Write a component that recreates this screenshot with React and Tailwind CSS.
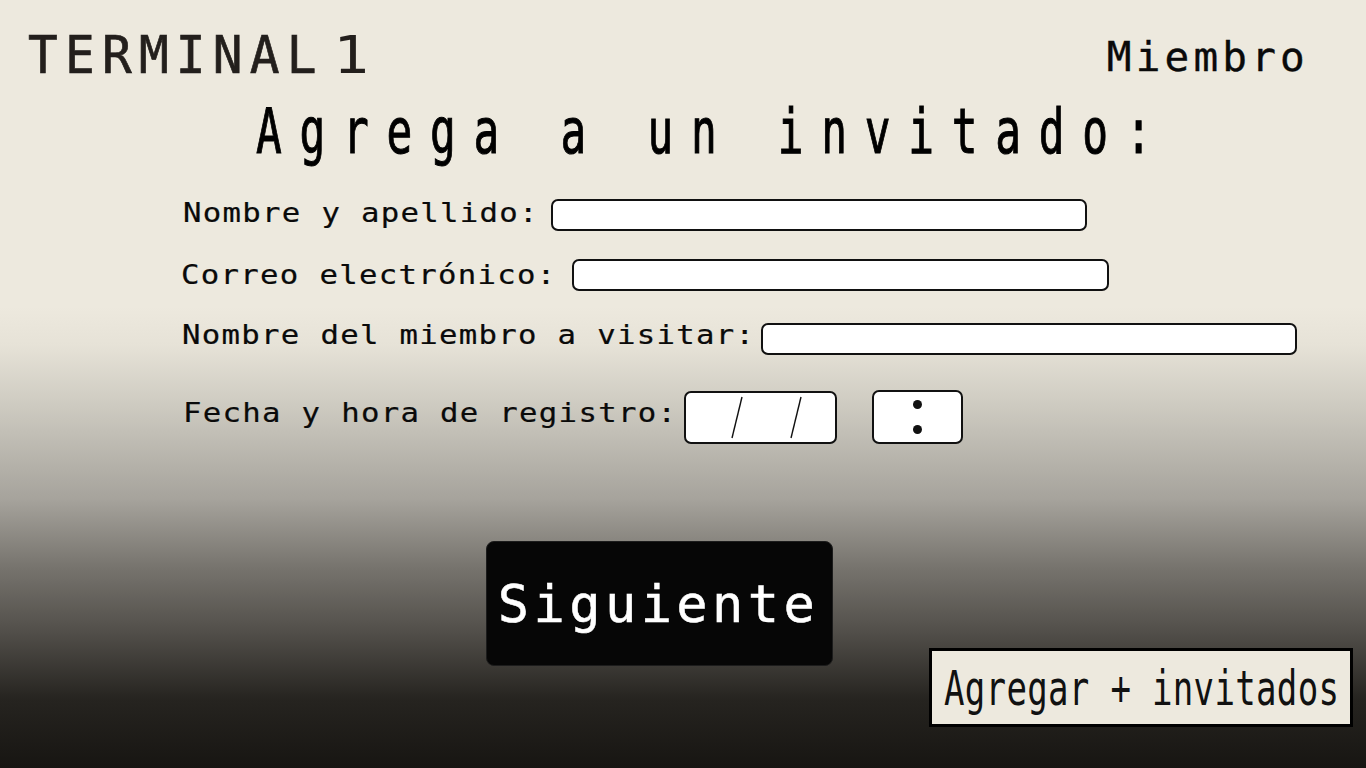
import React from "react";

function Label({ className, children }) {
  return (
    <div className={`shrink-0 ${className}`}>
      <span className="inline-block origin-left scale-x-[1.18] whitespace-nowrap text-[26px] leading-none tracking-[1.1px] text-[#0a0a0a] [-webkit-text-stroke:0.2px_#0a0a0a]">
        {children}
      </span>
    </div>
  );
}

function Field({ className }) {
  return (
    <div className={`h-[32px] rounded-[7px] border-[2.5px] border-[#111] bg-white ${className}`} />
  );
}

export default function App() {
  return (
    <div className="relative flex h-[768px] w-[1366px] flex-col overflow-hidden bg-[linear-gradient(to_bottom,#ede9de_0%,#ede9de_40%,#e6e2d7_45%,#d0cdc3_52%,#a6a39c_65%,#76736d_74%,#53504b_82%,#262420_91%,#171512_100%)] font-['DejaVu_Sans_Mono',monospace]">
      {/* Header */}
      <header className="flex items-start pl-[28px] pr-[57px] pt-[29px]">
        <div className="flex items-start text-[#231f1c]">
          <div className="w-[305px]">
            <span className="inline-block origin-left scale-x-[0.95] whitespace-nowrap text-[52px] leading-none tracking-[7.6px] [-webkit-text-stroke:0.7px_#231f1c]">
              TERMINAL
            </span>
          </div>
          <span className="inline-block origin-left scale-x-[1.15] text-[52px] leading-none">1</span>
        </div>
        <div className="ml-auto mt-[8px] whitespace-nowrap text-[41px] leading-none tracking-[4.2px] text-[#0a0a0a] [-webkit-text-stroke:0.4px_#0a0a0a]">
          Miembro
        </div>
      </header>

      {/* Title */}
      <h1 className="mt-[20px] pl-[256px]">
        <span className="inline-block origin-left scale-x-[0.69] whitespace-nowrap text-[62px] font-normal leading-none tracking-[25.7px] text-black [-webkit-text-stroke:1px_black]">
          Agrega a un invitado:
        </span>
      </h1>

      {/* Form rows */}
      <div className="mt-[36px] flex h-[32px] items-center pl-[183px]">
        <Label className="-mt-[2px] w-[368px]">Nombre y apellido:</Label>
        <Field className="w-[536px]" />
      </div>

      <div className="mt-[28px] flex h-[32px] items-center pl-[181px]">
        <Label className="mt-[2px] w-[391px]">Correo electrónico:</Label>
        <Field className="w-[537px]" />
      </div>

      <div className="mt-[32px] flex h-[32px] items-center pl-[182px]">
        <Label className="-mt-[6px] w-[579px]">Nombre del miembro a visitar:</Label>
        <Field className="w-[536px]" />
      </div>

      <div className="mt-[35px] flex h-[54px] items-center pl-[183px]">
        <Label className="-mt-[6px] w-[501px]">Fecha y hora de registro:</Label>
        <div className="h-[53px] w-[153px] rounded-[7px] border-[2.5px] border-[#111] bg-white">
          <svg width="148" height="48" viewBox="0 0 148 48" className="block">
            <line x1="46" y1="45" x2="56" y2="4" stroke="#111" strokeWidth="1.4" />
            <line x1="105" y1="45" x2="115" y2="4" stroke="#111" strokeWidth="1.4" />
          </svg>
        </div>
        <div className="ml-[35px] flex h-[54px] w-[91px] flex-col items-center justify-center gap-[16px] rounded-[7px] border-[2.5px] border-[#111] bg-white">
          <div className="h-[9px] w-[9px] rounded-full bg-[#111]" />
          <div className="h-[9px] w-[9px] rounded-full bg-[#111]" />
        </div>
      </div>

      {/* Buttons */}
      <div className="mt-[97px] flex items-start pl-[486px]">
        <button className="flex h-[125px] w-[347px] items-center justify-center rounded-[8px] border border-[#1c1c1c] bg-[#060606]">
          <span className="pr-[2px] text-[52px] leading-none tracking-[4.4px] text-white [-webkit-text-stroke:0.5px_white]">
            Siguiente
          </span>
        </button>
        <button className="ml-[96px] mt-[107px] flex h-[79px] w-[424px] items-center border-[3px] border-black bg-[#ede9de] pl-[12px]">
          <span className="inline-block origin-left scale-x-[0.71] whitespace-nowrap text-[48px] leading-none tracking-[0.4px] text-[#111]">
            Agregar + invitados
          </span>
        </button>
      </div>
    </div>
  );
}
